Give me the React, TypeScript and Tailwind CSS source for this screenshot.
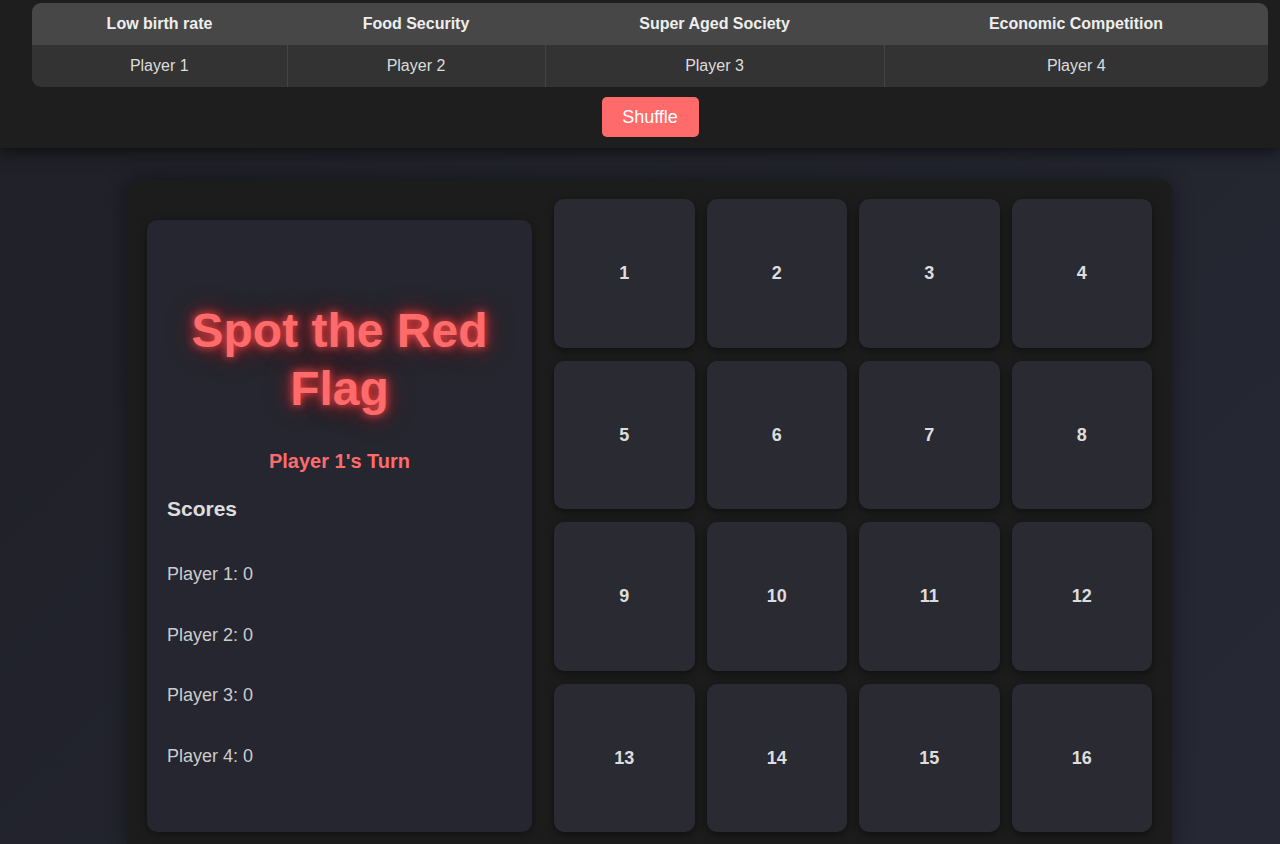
import { type ReactElement } from "react";

const ISSUES = [
  { title: "Low birth rate", player: "Player 1", width: "w-[255px]" },
  { title: "Food Security", player: "Player 2", width: "w-[258px]" },
  { title: "Super Aged Society", player: "Player 3", width: "w-[339px]" },
  { title: "Economic Competition", player: "Player 4", width: "" },
];

const TILES = Array.from({ length: 16 }, (_, i) => i + 1);
const SCORES = [1, 2, 3, 4].map((n) => ({ name: `Player ${n}`, score: 0 }));

export default function App(): ReactElement {
  return (
    <div className="min-h-[844px] bg-[linear-gradient(135deg,#1f2027,#262834)] font-['Liberation_Sans',Arial,sans-serif] text-[#e6e6e6]">
      <header className="relative z-10 bg-[#1e1e1e] pb-[11px] pl-8 pr-3 pt-[3px] shadow-[0_4px_14px_rgba(0,0,0,0.55)]">
        <div className="overflow-hidden rounded-[9px]">
          <table className="w-full border-collapse text-center text-base">
            <thead>
              <tr className="h-[42px] bg-[#474747]">
                {ISSUES.map((item) => (
                  <th key={item.title} className={`${item.width} font-bold text-[#eeeeee]`}>
                    {item.title}
                  </th>
                ))}
              </tr>
            </thead>
            <tbody>
              <tr className="h-[42px] bg-[#333333]">
                {ISSUES.map((item, i) => (
                  <td
                    key={item.player}
                    className={i > 0 ? "border-l border-[#444444] text-[#dddddd]" : "text-[#dddddd]"}
                  >
                    {item.player}
                  </td>
                ))}
              </tr>
            </tbody>
          </table>
        </div>
        <div className="mt-[10px] flex justify-center">
          <button
            type="button"
            className="h-10 w-[97px] rounded-[5px] bg-[#ff6b6b] text-lg text-white"
          >
            Shuffle
          </button>
        </div>
      </header>

      <main className="ml-[127px] mt-8 flex w-[1045px] gap-[22px] rounded-[12px] bg-[#1c1c1c] p-5 pt-[19px] shadow-[0_0_20px_rgba(0,0,0,0.4)]">
        <section className="mt-[21px] flex w-[385px] flex-col rounded-[10px] bg-[#25262f] px-5 pt-[82px] shadow-[0_2px_8px_rgba(0,0,0,0.4)]">
          <h1 className="text-center text-[48px] font-bold leading-[1.2] text-[#ff6b6b] [text-shadow:0_0_8px_rgba(255,80,80,0.9),0_0_18px_rgba(255,30,30,0.6),0_0_30px_rgba(200,0,0,0.4)]">
            Spot the Red Flag
          </h1>
          <p className="mt-[30px] text-center text-xl font-bold leading-7 text-[#ff6b6b]">
            Player 1's Turn
          </p>
          <h3 className="mt-[21px] text-[21px] font-bold leading-[25px] text-[#dddddd]">Scores</h3>
          <ul className="mt-[40px] flex flex-col gap-[33.5px]">
            {SCORES.map((s) => (
              <li key={s.name} className="text-lg leading-[27px] text-[#cccccc]">
                {s.name}: {s.score}
              </li>
            ))}
          </ul>
        </section>

        <div className="grid h-[633px] w-[598px] grid-cols-4 grid-rows-4 gap-x-3 gap-y-[13px]">
          {TILES.map((n) => (
            <button
              key={n}
              type="button"
              className="flex items-center justify-center rounded-[10px] bg-[#2a2a33] text-lg font-bold text-[#dddddd] shadow-[0_3px_8px_rgba(0,0,0,0.45)]"
            >
              {n}
            </button>
          ))}
        </div>
      </main>
    </div>
  );
}
